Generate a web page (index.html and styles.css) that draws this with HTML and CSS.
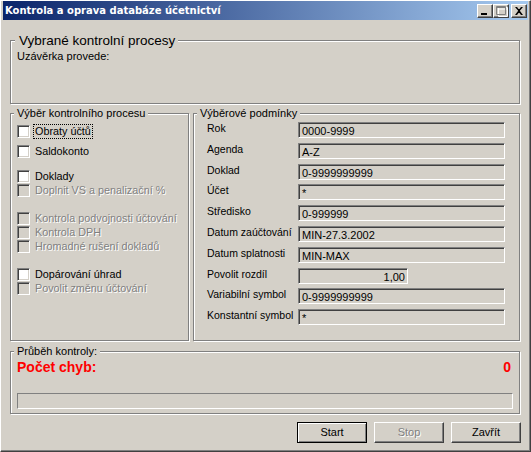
FILE: index.html
```html
<!DOCTYPE html>
<html lang="cs">
<head>
<meta charset="utf-8">
<title>Kontrola a oprava databáze účetnictví</title>
<link rel="stylesheet" href="styles.css">
</head>
<body>
<div class="window">
  <div class="titlebar">
    <span class="title">Kontrola a oprava databáze účetnictví</span>
    <div class="tb-buttons">
      <span class="tb-btn"><svg width="14" height="12" viewBox="0 0 14 12"><rect x="3" y="8" width="6" height="2" fill="#000"/></svg></span>
      <span class="tb-btn"><svg width="14" height="12" viewBox="0 0 14 12"><path d="M3.5 1.5h9v9h-9z M3 3h10" stroke="#fff" fill="none" transform="translate(1 1)"/><path d="M2.5 1.5h9v8h-9z M2 2.5h10" stroke="#808080" fill="none"/></svg></span>
      <span class="tb-btn close"><svg width="14" height="12" viewBox="0 0 14 12"><path d="M3 2h2l1.5 2h1L9 2h2L8 5.5V6l3 4H9L7.5 8h-1L5 10H3l3-4v-.5z" fill="#000"/></svg></span>
    </div>
  </div>

  <div class="client">
    <fieldset class="group g-top">
      <legend>Vybrané kontrolní procesy</legend>
      <div class="uzaverka">Uzávěrka provede:</div>
    </fieldset>

    <div class="middle">
      <fieldset class="group g-left">
        <legend>Výběr kontrolního procesu</legend>
        <div class="checks">
          <div class="check r1"><span class="cb"></span><span class="lbl focus">Obraty účtů</span></div>
          <div class="check r2"><span class="cb"></span><span class="lbl">Saldokonto</span></div>
          <div class="check r3"><span class="cb"></span><span class="lbl">Doklady</span></div>
          <div class="check dis"><span class="cb"></span><span class="lbl">Doplnit VS a penalizační %</span></div>
          <div class="check dis r5"><span class="cb"></span><span class="lbl">Kontrola podvojnosti účtování</span></div>
          <div class="check dis"><span class="cb"></span><span class="lbl">Kontrola DPH</span></div>
          <div class="check dis"><span class="cb"></span><span class="lbl">Hromadné rušení dokladů</span></div>
          <div class="check r8"><span class="cb"></span><span class="lbl">Dopárování úhrad</span></div>
          <div class="check dis"><span class="cb"></span><span class="lbl">Povolit změnu účtování</span></div>
        </div>
      </fieldset>

      <fieldset class="group g-right">
        <legend>Výběrové podmínky</legend>
        <div class="conds">
          <span class="clbl">Rok</span><div class="field">0000-9999</div>
          <span class="clbl">Agenda</span><div class="field">A-Z</div>
          <span class="clbl">Doklad</span><div class="field">0-9999999999</div>
          <span class="clbl">Účet</span><div class="field">*</div>
          <span class="clbl">Středisko</span><div class="field">0-999999</div>
          <span class="clbl">Datum zaúčtování</span><div class="field">MIN-27.3.2002</div>
          <span class="clbl">Datum splatnosti</span><div class="field">MIN-MAX</div>
          <span class="clbl">Povolit rozdíl</span><div class="field short num">1,00</div>
          <span class="clbl">Variabilní symbol</span><div class="field">0-9999999999</div>
          <span class="clbl">Konstantní symbol</span><div class="field">*</div>
        </div>
      </fieldset>
    </div>

    <fieldset class="group g-progress">
      <legend>Průběh kontroly:</legend>
      <div class="errors"><span>Počet chyb:</span><span>0</span></div>
      <div class="progress"></div>
    </fieldset>

    <div class="buttons">
      <span class="btn default">Start</span>
      <span class="btn disabled">Stop</span>
      <span class="btn">Zavřít</span>
    </div>
  </div>
</div>
</body>
</html>
```
FILE: styles.css
```css
* { box-sizing: border-box; }
html, body { margin: 0; padding: 0; }
body {
  width: 531px;
  height: 452px;
  overflow: hidden;
  background: #d4d0c8;
  font-family: "Liberation Sans", Arial, sans-serif;
  font-size: 11px;
  color: #000;
}
.window {
  width: 531px;
  height: 452px;
  display: flex;
  flex-direction: column;
  background: #d4d0c8;
  border-top: 1px solid #fff;
  border-left: 1px solid #fff;
  border-right: 1px solid #404040;
  border-bottom: 1px solid #404040;
  box-shadow: inset -1px -1px 0 #808080;
  padding: 0 2px 2px 2px;
}
.titlebar {
  height: 19px;
  flex: none;
  display: flex;
  align-items: center;
  justify-content: space-between;
  padding: 0 1px 0 1px;
  background: linear-gradient(to right, #0a246a, #a6caf0);
  color: #fff;
}
.title {
  font-family: "DejaVu Sans", "Liberation Sans", sans-serif;
  font-weight: bold;
  font-size: 10px;
  line-height: 13px;
  white-space: nowrap;
  padding-left: 1px;
}
.tb-buttons { display: flex; align-items: center; }
.tb-btn {
  width: 16px;
  height: 14px;
  display: flex;
  align-items: center;
  justify-content: center;
  background: #d4d0c8;
  border: 1px solid;
  border-color: #fff #404040 #404040 #fff;
  box-shadow: inset -1px -1px 0 #808080;
}
.tb-btn svg { display: block; }
.tb-btn.close { margin-left: 2px; }

.client {
  flex: 1;
  display: flex;
  flex-direction: column;
  padding: 13px 7px 0 7px;
}

.group {
  margin: 0;
  min-width: 0;
  border: 1px solid #808080;
  box-shadow: 1px 1px 0 #fff, inset 1px 1px 0 #fff;
  padding: 0 6px;
}
.group legend {
  margin-left: -3px;
  padding: 0 3px;
  font-size: 11px;
  line-height: 13px;
  background: #d4d0c8;
}

.g-top { height: 71px; flex: none; margin-right: 1px; }
.g-top legend {
  font-size: 13.5px;
  line-height: 15px;
  margin-left: -2px;
  padding: 0 3px 0 4px;
}
.uzaverka { margin-top: 2px; line-height: 13px; }

.middle {
  display: flex;
  gap: 4px;
  margin-top: 3px;
  height: 234px;
  flex: none;
}
.g-left { width: 179px; flex: none; }
.g-right { flex: 1; margin-right: 1px; }

.checks { padding-top: 5px; display: flex; flex-direction: column; }
.check {
  display: flex;
  align-items: center;
  height: 13px;
  margin-bottom: 1px;
  white-space: nowrap;
}
.check.r2 { margin-top: 6px; }
.check.r3 { margin-top: 11px; }
.check.r5 { margin-top: 14px; }
.check.r8 { margin-top: 14px; }
.cb {
  width: 13px;
  height: 13px;
  flex: none;
  background: #fff;
  border: 1px solid;
  border-color: #808080 #fff #fff #808080;
  box-shadow: inset 1px 1px 0 #404040, inset -1px -1px 0 #d4d0c8;
}
.lbl {
  margin-left: 3px;
  padding: 0 1px;
  border: 1px solid transparent;
  line-height: 13px;
  font-size: 10.8px;
}
.lbl.focus { border: 1px dotted #000; }
.check.dis .cb { background: #d4d0c8; }
.check.dis .lbl { color: #808080; text-shadow: 1px 1px 0 #fff; }

.conds {
  padding: 2px 0 0 7px;
  display: grid;
  grid-template-columns: 91px 207px;
  grid-auto-rows: 16px;
  row-gap: 4.8px;
}
.clbl { line-height: 13px; white-space: nowrap; align-self: start; font-size: 10.5px; }
.field {
  height: 16px;
  border: 1px solid;
  border-color: #808080 #fff #fff #808080;
  box-shadow: inset 1px 1px 0 #404040, inset -1px -1px 0 #d4d0c8;
  padding: 1px 1px 0 3px;
  line-height: 14px;
  white-space: nowrap;
  background: #d4d0c8;
}
.field.short { width: 110px; }
.field.num { text-align: right; padding-right: 2px; }

.g-progress { height: 69px; flex: none; margin-top: 4px; margin-right: 1px; }
.errors {
  display: flex;
  justify-content: space-between;
  color: #ff0000;
  font-weight: bold;
  font-size: 14px;
  line-height: 16px;
  margin-top: 1px;
  padding-right: 2px;
}
.progress {
  margin-top: 18px;
  height: 16px;
  border: 1px solid;
  border-color: #808080 #fff #fff #808080;
}

.buttons {
  display: flex;
  justify-content: flex-end;
  gap: 7px;
  margin-top: 8px;
}
.btn {
  width: 70px;
  height: 21px;
  display: flex;
  align-items: center;
  justify-content: center;
  border: 1px solid;
  border-color: #fff #404040 #404040 #fff;
  box-shadow: inset -1px -1px 0 #808080;
  line-height: 13px;
}
.btn.default {
  border-color: #000;
  box-shadow: inset 1px 1px 0 #fff, inset -1px -1px 0 #808080;
}
.btn.disabled { color: #808080; text-shadow: 1px 1px 0 #fff; }
```
